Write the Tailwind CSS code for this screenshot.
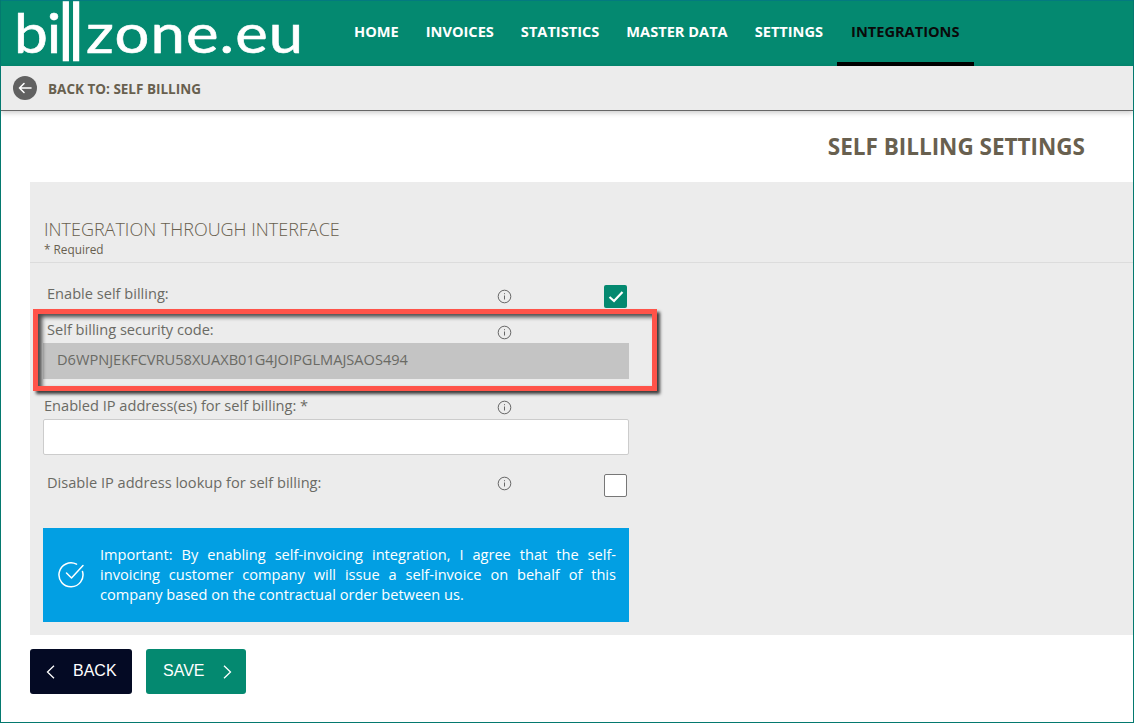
<!DOCTYPE html>
<html lang="en">
<head>
    <meta charset="UTF-8">
    <meta name="viewport" content="width=device-width, initial-scale=1.0">
    <title>Self billing settings</title>
    <script src="https://cdn.jsdelivr.net/npm/@tailwindcss/browser@4"></script>
</head>
<body class="bg-white font-['Open_Sans',sans-serif] overflow-hidden">
    <div class="relative h-[723px] w-[1134px] border border-[#04796f] border-t-0 overflow-hidden">
        <!-- Header -->
        <header class="flex h-[66px] bg-[#048970] border-t border-[#047a80] pl-[13px]">
            <div class="flex w-[340px] h-[65px] font-['Lato',sans-serif] text-white whitespace-nowrap [-webkit-text-stroke:0.6px_white]">
                <span class="text-[54px] leading-[65px] h-[65px] -mt-[1px] origin-left scale-x-[1.12] tracking-[-1px]">bi</span>
                <span class="text-[78px] leading-[59px] h-[59px] font-light tracking-[-7px] ml-[2px] pr-[6px] [-webkit-text-stroke:2.4px_white]">ll</span>
                <span class="text-[54px] leading-[65px] h-[65px] -mt-[1px] ml-[2px] tracking-[1px] origin-left scale-x-[1.14]">zone.eu</span>
            </div>
            <nav class="flex text-[14.6px] font-bold text-white">
                <a class="h-[65px] pt-[20px] mr-[27px]">HOME</a>
                <a class="h-[65px] pt-[20px] mr-[27px]">INVOICES</a>
                <a class="h-[65px] pt-[20px] mr-[27px]">STATISTICS</a>
                <a class="h-[65px] pt-[20px] mr-[27px]">MASTER DATA</a>
                <a class="h-[65px] pt-[20px] mr-[14px]">SETTINGS</a>
                <a class="h-[65px] pt-[20px] px-[14px] text-[#0a0a0a] border-b-4 border-black">INTEGRATIONS</a>
            </nav>
        </header>

        <!-- Back bar -->
        <div class="flex items-center h-[45px] bg-[#ececec] border-b border-[#666] pl-[12px] shadow-[0_2px_5px_rgba(0,0,0,0.2)]">
            <span class="flex items-center justify-center w-[24px] h-[24px] rounded-full bg-[#616161]">
                <svg width="16" height="14" viewBox="0 0 16 14" fill="none" stroke="#fff" stroke-width="1.6" stroke-linecap="round" stroke-linejoin="round"><path d="M14 7H2.5M7 2.5 2.5 7 7 11.5"/></svg>
            </span>
            <span class="ml-[11px] pt-[2px] text-[13.5px] font-bold text-[#68604f]">BACK TO: SELF BILLING</span>
        </div>

        <h1 class="h-[71px] pt-[20px] pr-[48px] text-right text-[22.5px] leading-[31px] font-bold text-[#68604f]">SELF BILLING SETTINGS</h1>

        <!-- Form panel -->
        <section class="ml-[29px] h-[453px] bg-[#ececec] pt-[35px]">
            <div class="pl-[14px] border-b border-[#dcdcdc] h-[46px]">
                <h2 class="text-[18px] leading-[24px] font-light text-[#68604f]">INTEGRATION THROUGH INTERFACE</h2>
                <p class="text-[11.8px] leading-[16px] text-[#68604f]">* Required</p>
            </div>

            <div class="w-[600px] text-[14.6px] text-[#6a6a64]">
                <div class="flex items-center h-[32px] mt-[15px] pl-[17px]">
                    <span class="w-[450px]">Enable self billing:</span>
                    <svg class="mt-[4px]" width="15" height="15" viewBox="0 0 15 15" fill="none" stroke="#666"><circle cx="7.5" cy="7.5" r="6.3"/><path d="M7.5 6.5v4M7.5 4.2v1"/></svg>
                    <span class="flex items-center justify-center w-[23px] h-[23px] ml-[92px] mt-[5px] rounded-[2px] bg-[#048970]">
                        <svg width="16" height="13" viewBox="0 0 16 13" fill="none" stroke="#fff" stroke-width="2.2"><path d="M1.5 7 6 11 14.5 2"/></svg>
                    </span>
                </div>

                <div class="flex items-center h-[26px] mt-[7px] pl-[17px]">
                    <span class="w-[450px]">Self billing security code:</span>
                    <svg class="mt-[4px]" width="15" height="15" viewBox="0 0 15 15" fill="none" stroke="#666"><circle cx="7.5" cy="7.5" r="6.3"/><path d="M7.5 6.5v4M7.5 4.2v1"/></svg>
                </div>
                <div class="flex items-center ml-[13px] w-[586px] h-[36px] pl-[14px] pb-[3px] bg-[#c4c4c4]">D6WPNJEKFCVRU58XUAXB01G4JOIPGLMAJSAOS494</div>

                <div class="flex items-center h-[26px] mt-[14px] pl-[14px]">
                    <span class="w-[453px]">Enabled IP address(es) for self billing: *</span>
                    <svg class="mt-[2px]" width="15" height="15" viewBox="0 0 15 15" fill="none" stroke="#666"><circle cx="7.5" cy="7.5" r="6.3"/><path d="M7.5 6.5v4M7.5 4.2v1"/></svg>
                </div>
                <div class="ml-[13px] w-[586px] h-[36px] bg-white border border-[#ccc] rounded-[2px]"></div>

                <div class="flex items-center h-[32px] mt-[12px] pl-[17px]">
                    <span class="w-[450px]">Disable IP address lookup for self billing:</span>
                    <svg width="15" height="15" viewBox="0 0 15 15" fill="none" stroke="#666"><circle cx="7.5" cy="7.5" r="6.3"/><path d="M7.5 6.5v4M7.5 4.2v1"/></svg>
                    <span class="w-[23px] h-[23px] ml-[92px] mt-[5px] bg-white border border-[#777] rounded-[2px]"></span>
                </div>

                <div class="flex items-center ml-[13px] w-[586px] h-[94px] mt-[29px] pl-[15px] pr-[13px] pb-[2px] bg-[#029fe3] text-white">
                    <svg class="shrink-0" width="28" height="28" viewBox="0 0 28 28" fill="none" stroke="#fff" stroke-width="1.5" stroke-linecap="round" stroke-linejoin="round"><path d="M24.5 11.5A12 12 0 1 1 18.5 4.2"/><path d="M8.5 13l5 5L25 5.5"/></svg>
                    <p class="ml-[14px] text-justify leading-[20px]">Important: By enabling self-invoicing integration, I agree that the self-invoicing customer company will issue a self-invoice on behalf of this company based on the contractual order between us.</p>
                </div>
            </div>
        </section>

        <!-- Buttons -->
        <div class="flex gap-[14px] ml-[29px] mt-[14px] font-['Liberation_Sans',sans-serif] text-[16px] text-white">
            <button class="flex items-center w-[102px] h-[45px] pl-[16px] rounded-[3px] bg-[#040a24]">
                <svg width="9" height="14" viewBox="0 0 9 14" fill="none" stroke="#fff" stroke-width="1.3"><path d="M8 .8 1.5 7 8 13.2"/></svg>
                <span class="ml-[18px] -mt-[2px]">BACK</span>
            </button>
            <button class="flex items-center w-[100px] h-[45px] pl-[17px] rounded-[3px] bg-[#048970]">
                <span class="-mt-[2px]">SAVE</span>
                <svg class="ml-[18px]" width="9" height="14" viewBox="0 0 9 14" fill="none" stroke="#fff" stroke-width="1.3"><path d="M1 .8 7.5 7 1 13.2"/></svg>
            </button>
        </div>

        <!-- Highlight annotation -->
        <div class="absolute left-[32px] top-[309px] w-[624px] h-[82px] border-[5px] border-[#ff5349] shadow-[3px_3px_3px_rgba(0,0,0,0.75),inset_4px_3px_4px_rgba(0,0,0,0.7)]"></div>
    </div>
</body>
</html>
